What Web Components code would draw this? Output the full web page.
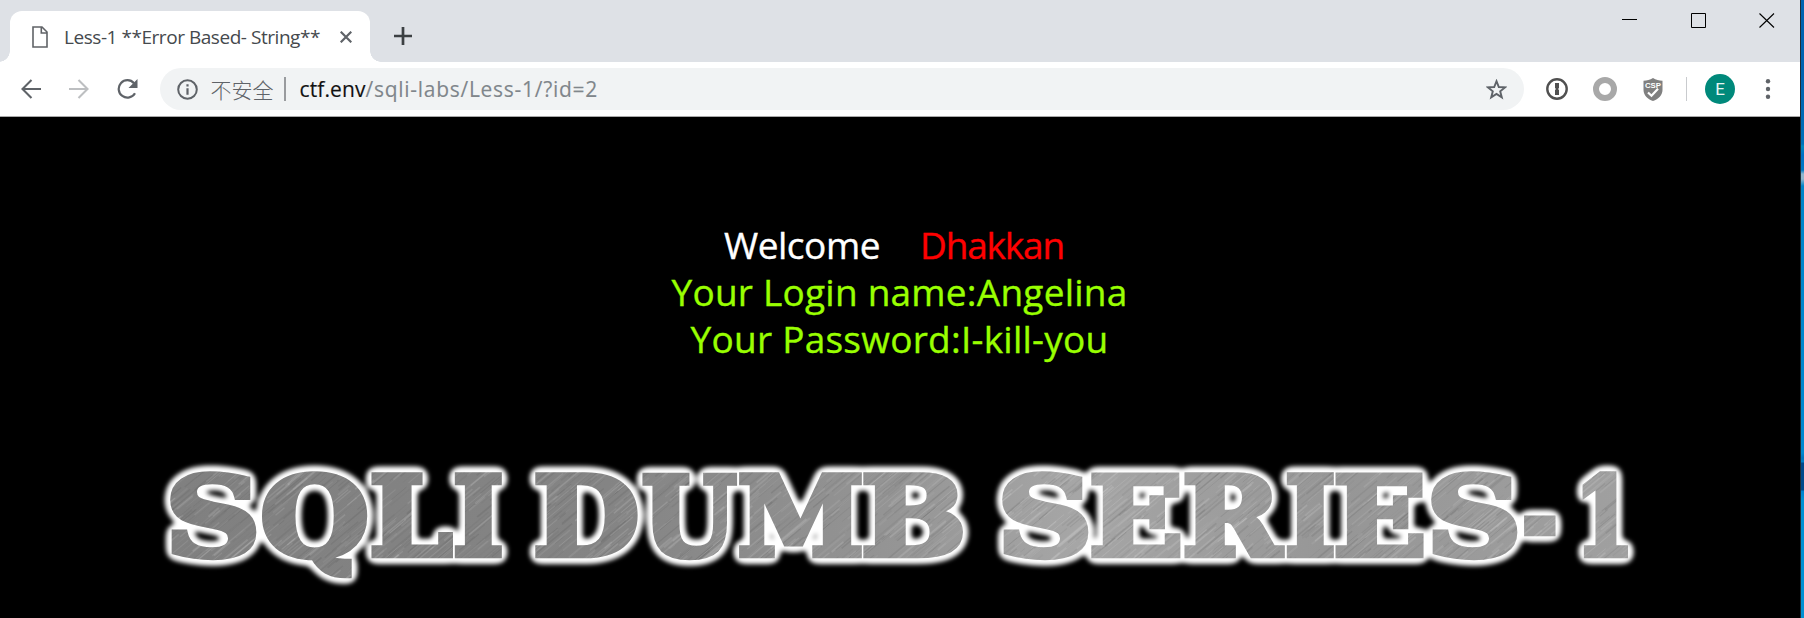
<!DOCTYPE html>
<html lang="zh">
<head>
<meta charset="utf-8">
<title>Less-1 **Error Based- String**</title>
<style>
html,body{margin:0;padding:0;height:618px;overflow:hidden;background:#000}
body{font-family:"Open Sans","Noto Sans CJK SC",sans-serif}
</style>
</head>
<body>
<desktop-frame>
  <tab-strip slot="tabs"><fit-text width="256">Less-1 **Error Based- String**</fit-text></tab-strip>
  <tool-bar slot="tools"></tool-bar>
  <page-view slot="page"></page-view>
</desktop-frame>
<script>
function define(name, html, setup) {
  const t = document.createElement('template');
  t.innerHTML = html;
  customElements.define(name, class extends HTMLElement {
    constructor() {
      super();
      this.attachShadow({mode: 'open'}).append(t.content.cloneNode(true));
    }
    connectedCallback() { if (setup) setup(this, this.shadowRoot); }
  });
}

define('metal-banner', `<style>
:host{display:block}svg{display:block}
text{font:bold 108px "DejaVu Serif",serif;fill:url(#metal);stroke:url(#metal);stroke-width:6.5;stroke-linejoin:miter;white-space:pre}
</style>
<svg width="1800" height="168" viewBox="0 450 1800 168">
<defs>
<linearGradient id="tone" x1="170" x2="1630" y1="0" y2="0" gradientUnits="userSpaceOnUse">
<stop offset="0" stop-color="#808080"/><stop offset=".3" stop-color="#848484"/><stop offset=".5" stop-color="#959595"/><stop offset=".62" stop-color="#a6a6a6"/><stop offset=".8" stop-color="#969696"/><stop offset="1" stop-color="#a0a0a0"/></linearGradient>
<pattern id="metal" patternUnits="userSpaceOnUse" x="0" y="440" width="1800" height="180">
<rect width="1800" height="180" fill="url(#tone)"/><g id="streaks"></g></pattern>
<filter id="glow" filterUnits="userSpaceOnUse" x="140" y="450" width="1520" height="150" color-interpolation-filters="sRGB">
<feGaussianBlur in="SourceAlpha" stdDeviation="4.4" result="b"/>
<feComponentTransfer in="b" result="wide"><feFuncA type="linear" slope="14" intercept="-.7"/></feComponentTransfer>
<feFlood flood-color="#fff"/><feComposite in2="wide" operator="in"/>
<feGaussianBlur stdDeviation="2" result="halo"/>
<feMerge><feMergeNode in="halo"/><feMergeNode in="SourceGraphic"/></feMerge>
</filter>
</defs>
<text y="555" filter="url(#glow)"></text>
</svg>`, (el, root) => {
  const NS = 'http://www.w3.org/2000/svg';
  const chars = [['S',171,256],['Q',262,367],['L',372,453],['I',455,502],[' '],
    ['D',536,638],['U',642,737],['M',739,862],['B',864,963],[' '],
    ['S',1003,1088],['E',1092,1180],['R',1185,1285],['I',1287,1334],['E',1336,1423],['S',1432,1517],['-',1523,1556],['1',1582,1629]];
  const ctx = document.createElement('canvas').getContext('2d');
  ctx.font = 'bold 108px "DejaVu Serif"';
  const text = root.querySelector('text');
  for (const [c, a, b] of chars) {
    const t = document.createElementNS(NS, 'tspan');
    t.textContent = c;
    if (a) {
      const m = ctx.measureText(c), l = -m.actualBoundingBoxLeft, r = m.actualBoundingBoxRight;
      const k = (b - a - 6) / (r - l);
      t.setAttribute('x', a + 3 - l * k);
      t.setAttribute('textLength', m.width * k);
      t.setAttribute('lengthAdjust', 'spacingAndGlyphs');
    }
    text.append(t);
  }
  let seed = 7;
  const rnd = () => (seed = (seed * 16807) % 2147483647) / 2147483647;
  const g = root.querySelector('#streaks');
  let s = '';
  for (let i = 0; i < 3600; i++) {
    const x = rnd() * 1800, y = rnd() * 180, len = 10 + rnd() * 45, v = rnd() < .5 ? '#fff' : '#333';
    s += `<path d="M${x.toFixed(1)} ${y.toFixed(1)}l${(len * .77).toFixed(1)} ${(-len * .64).toFixed(1)}" stroke="${v}" stroke-width="${(.8 + rnd() * 1.2).toFixed(1)}" stroke-opacity="${(.03 + rnd() * .1).toFixed(2)}"/>`;
  }
  g.innerHTML = s;
});

define('page-view', `<style>
:host{display:flex;flex-direction:column;height:501px;background:#000;color:#9f0;font-size:37px;line-height:47px;-webkit-text-stroke:.35px currentColor}
.copy{padding-top:104px;height:229px;display:flex;flex-direction:column;align-items:center;width:1799px}
metal-banner{-webkit-text-stroke:0}
.row{display:flex;height:47px}.hi{color:#fff;gap:40px;margin-right:11px}.red{color:red}
</style>
<div class="copy">
<div class="row hi"><fit-text width="156">Welcome</fit-text><fit-text class="red" width="144">Dhakkan</fit-text></div>
<div class="row"><fit-text width="456">Your Login name:Angelina</fit-text></div>
<div class="row"><fit-text width="418">Your Password:I-kill-you</fit-text></div>
</div>
<metal-banner></metal-banner>`);

define('tab-strip', `<style>
:host{display:flex;height:62px;background:#dee1e6;align-items:flex-end}
.tab{box-sizing:border-box;width:360px;height:51px;margin-left:10px;padding-left:22px;border-radius:12px 12px 0 0;background:#fff;display:flex;align-items:center;color:#45494d;font-size:19px;line-height:26px;position:relative}
.tab::before,.tab::after{content:"";position:absolute;bottom:0;width:11px;height:11px}
.tab::before{left:-11px;background:radial-gradient(circle at 0 0,#dee1e6 10.5px,#fff 11px)}
.tab::after{right:-11px;background:radial-gradient(circle at 100% 0,#dee1e6 10.5px,#fff 11px)}
.page{margin-right:16px}.title{width:256px}.x{margin-left:20px}
.plus{margin:0 0 16px 24px}
.win{margin-left:auto;align-self:flex-start;display:flex;padding:13px 25px 0 0;gap:54px}
.win svg:nth-child(2){margin-right:-1px}
svg{display:block;flex:none}
</style>
<div class="tab">
<svg class="page" width="16" height="22" viewBox="0 0 16 22" fill="none" stroke="#606367" stroke-width="1.6"><path d="M1 1h9l5 5v15H1zM9.3 1v6H15"/></svg>
<div class="title"><slot></slot></div>
<svg class="x" width="12" height="12" viewBox="0 0 12 12" stroke="#5f6368" stroke-width="2.2"><path d="M.7.7l10.6 10.6M11.3.7L.7 11.3"/></svg>
</div>
<svg class="plus" width="18" height="20" viewBox="0 0 18 20" stroke="#3c4043" stroke-width="2.7"><path d="M0 10h18M9 1v18"/></svg>
<div class="win">
<svg width="15" height="15"><path d="M0 6.5h15" stroke="#000"/></svg>
<svg width="15" height="15"><path d="M.5.5h14v14H.5z" stroke="#000" fill="none"/></svg>
<svg width="16" height="15"><path d="M.5.5l14.5 14M15 .5L.5 14.5" stroke="#000" stroke-width="1.1"/></svg>
</div>`);

define('tool-bar', `<style>
:host{display:flex;box-sizing:border-box;height:55px;background:#fff;border-bottom:1px solid #a9a9a9;padding-left:21px;align-items:center}
svg{display:block;flex:none}
.fwd{margin-left:28px}.re{margin-left:28px}
.box{box-sizing:border-box;margin:0 0 0 22px;width:1364px;height:42px;border-radius:21px;background:#f1f3f4;display:flex;align-items:center;padding:0 17px;font-size:21px;line-height:30px}
.cn{margin-left:12.5px;color:#5f6368;font:300 21px/30px "Noto Sans CJK SC",sans-serif}
.bar{width:1.5px;height:24px;background:#999b9e;margin:0 14px 0 10.5px}
.host{color:#111;-webkit-text-stroke:.15px}.path{color:#80868b;-webkit-text-stroke:.1px}.star{margin-left:auto}
.a{margin-left:22px}.b{margin-left:25px}.c{margin-left:26px}
.sep{width:1px;height:24px;background:#c9cbce;margin-left:23px}
.me{width:30px;height:30px;border-radius:50%;background:#00897b;color:#e8f5f3;font:17px/31px Roboto,sans-serif;text-align:center;margin-left:18px}
.dots{margin-left:30px}
</style>
<svg width="20" height="20" viewBox="0 0 20 20" fill="none" stroke="#5f6368" stroke-width="2.1"><path d="M20 10H2M10.5 1L1.5 10l9 9"/></svg>
<svg class="fwd" width="20" height="20" viewBox="0 0 20 20" fill="none" stroke="#bdbfc1" stroke-width="2.1"><path d="M0 10h18M9.5 1l9 9-9 9"/></svg>
<svg class="re" width="21" height="20" viewBox="0 0 21 20"><path d="M18 14.2A8.7 8.7 0 1 1 17 4.2" fill="none" stroke="#5f6368" stroke-width="2.2"/><path d="M20.5 0v9h-9z" fill="#5f6368"/></svg>
<div class="box">
<svg width="21" height="21" viewBox="0 0 21 21"><circle cx="10.5" cy="10.5" r="9.3" fill="none" stroke="#5f6368" stroke-width="2"/><path d="M10.5 5.2v2.3M10.5 9.2v6.5" stroke="#5f6368" stroke-width="2.2"/></svg>
<span class="cn">不安全</span><span class="bar"></span>
<fit-text class="host" width="66">ctf.env</fit-text><fit-text class="path" width="232.5">/sqli-labs/Less-1/?id=2</fit-text>
<svg class="star" width="21" height="21" viewBox="0 0 21 21"><path d="M10.5 2.2l2.3 5.800 6.200.4-4.800 3.900 1.600 6.100-5.300-3.400-5.300 3.400 1.600-6.100-4.800-3.900 6.200-.4z" fill="none" stroke="#5f6368" stroke-width="1.9"/></svg>
</div>
<svg class="a" width="22" height="22" viewBox="0 0 22 22"><circle cx="11" cy="11" r="9.7" fill="#fff" stroke="#505050" stroke-width="2.4"/><path d="M9 5h4v5l-1 1 1 1v5H9v-5l1-1-1-1z" fill="#505050"/></svg>
<svg class="b" width="24" height="24" viewBox="0 0 24 24"><circle cx="12" cy="12" r="9" fill="none" stroke="#a8a8a8" stroke-width="6"/></svg>
<svg class="c" width="20" height="23" viewBox="0 0 20 23"><path d="M10 0c3 2 6 2.7 9.5 2.7V12c0 5-4 9-9.5 11C4.500 21 .5 17 .5 12V2.700C4 2.700 7 2 10 0z" fill="#808080"/><text x="10" y="9.800" text-anchor="middle" textLength="16" lengthAdjust="spacingAndGlyphs" font-family="Liberation Sans" font-weight="bold" font-size="7.500" fill="#fff">CSP</text><path d="M5 14.500l3.500 3.300 6.500-7" fill="none" stroke="#fff" stroke-width="2.2"/></svg>
<span class="sep"></span><span class="me">E</span>
<svg class="dots" width="6" height="20" viewBox="0 0 6 20" fill="#5f6368"><circle cx="3" cy="2.300" r="2.200"/><circle cx="3" cy="10" r="2.200"/><circle cx="3" cy="17.700" r="2.200"/></svg>`);

define('desktop-frame', `<style>
:host{display:grid;grid-template-columns:1800px 1px 3px;height:618px}
.edge{background:#222d36}
.wall{background:linear-gradient(#0063b0 0,#0063b0 70px,#0070b8 144px,#0088bd 146px,#0070c4 155px,#0078c4 170px,#8fb6cc 174px,#8fb6cc 179px,#0084c8 186px,#0088cf 453px,#0074bd 458px,#0080c8 462px,#00488a 463px,#00488a 490px,#0080cc 491px,#0090d2 500px,#0090d2)}
</style>
<div><slot name="tabs"></slot><slot name="tools"></slot><slot name="page"></slot></div>
<div class="edge"></div><div class="wall"></div>`);

/* Tracks its text so that the line spans the given width. Defined last:
   it measures, so the styles around it must already be in place. */
define('fit-text', `<style>:host{display:inline-block;white-space:pre}span{display:inline-block}</style><span><slot></slot></span>`, (el, root) => {
  const s = root.querySelector('span');
  const n = el.textContent.length;
  const w = s.getBoundingClientRect().width;
  s.style.letterSpacing = ((+el.getAttribute('width') - w) / n) + 'px';
});
</script>
</body>
</html>
